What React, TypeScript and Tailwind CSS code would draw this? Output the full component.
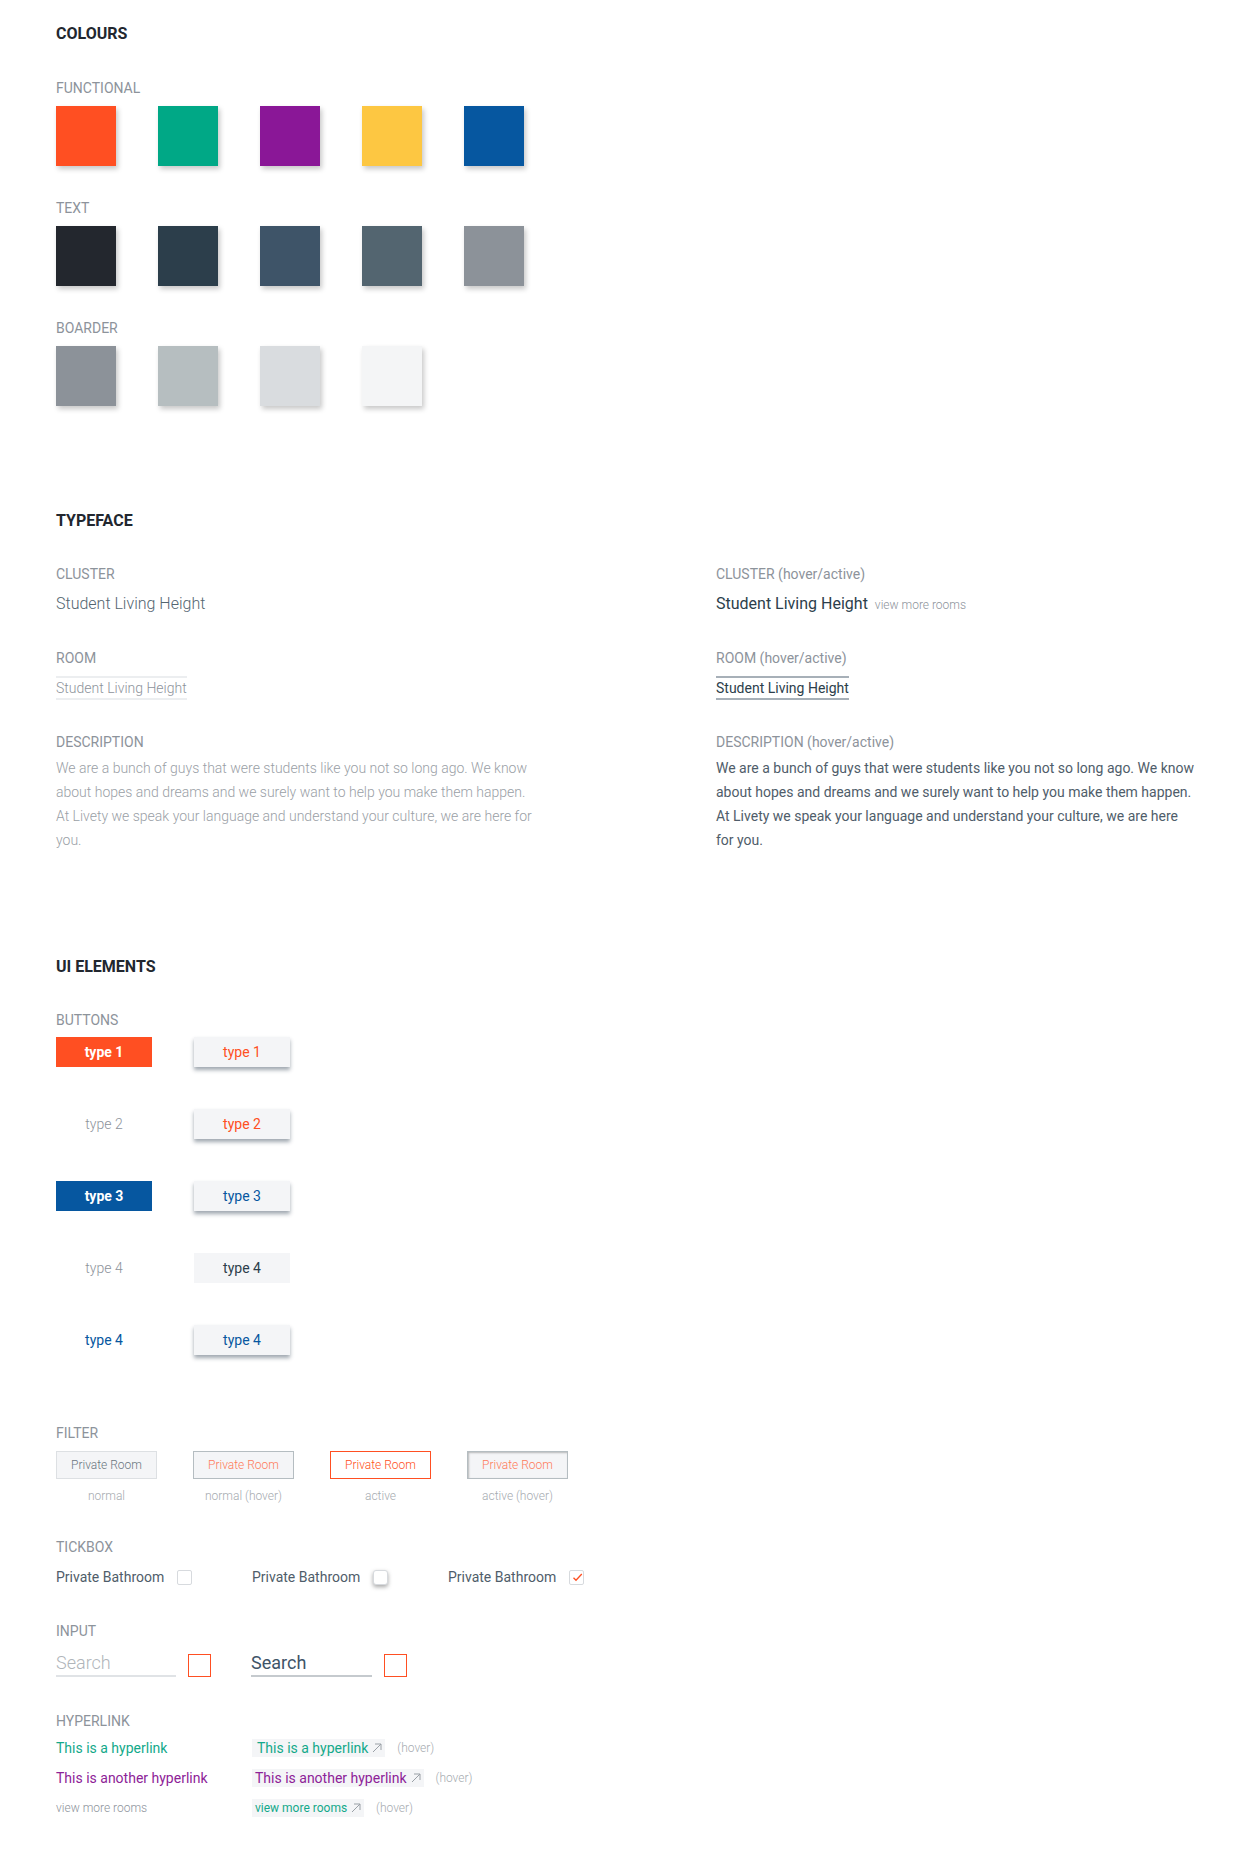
import { ReactNode } from "react";

const Heading = ({ children }: { children: ReactNode }) => (
    <h2 className="text-[16px] leading-5 font-bold text-[#22272f]">{children}</h2>
);

const Label = ({ children, className = "" }: { children: ReactNode; className?: string }) => (
    <div className={"text-[14px] leading-4 text-[#8d939b] " + className}>{children}</div>
);

const palettes = [
    { name: "FUNCTIONAL", colors: ["bg-[#ff4f22]", "bg-[#00a886]", "bg-[#8a1797]", "bg-[#fdc742]", "bg-[#0657a0]"] },
    { name: "TEXT", colors: ["bg-[#23272e]", "bg-[#2c3e4b]", "bg-[#3e5468]", "bg-[#536570]", "bg-[#8c9299]"] },
    { name: "BOARDER", colors: ["bg-[#8c9299]", "bg-[#b6bec0]", "bg-[#d9dcdf]", "bg-[#f4f5f6]"] },
];

const description =
    "We are a bunch of guys that were students like you not so long ago. We know about hopes and dreams and we surely want to help you make them happen. At Livety we speak your language and understand your culture, we are here for you.";

const Arrow = () => (
    <svg width="10" height="10" viewBox="0 0 10 10" fill="none" stroke="#9aa0a6" strokeWidth="1">
        <path d="M1 9L9 1M3 1H9V7" />
    </svg>
);

const btnBase = "h-[30px] w-[96px] flex items-center justify-center text-[14px]";
const raised = "bg-[#f4f5f7] shadow-[0_3px_4px_rgba(44,62,80,0.45)]";

export default function App() {
    return (
        <div className="min-h-[1858px] bg-white px-[56px] pt-[24px] pb-10 font-['Roboto',sans-serif]">
            {/* colours */}
            <Heading>COLOURS</Heading>
            <div className="mt-[36px] flex flex-col gap-[34px]">
                {palettes.map((p) => (
                    <div key={p.name}>
                        <Label>{p.name}</Label>
                        <div className="mt-[10px] flex gap-[42px]">
                            {p.colors.map((c, i) => (
                                <div key={i} className={"h-[60px] w-[60px] shadow-[2px_3px_5px_rgba(0,0,0,0.22)] " + c} />
                            ))}
                        </div>
                    </div>
                ))}
            </div>

            {/* typeface */}
            <div className="mt-[105px]">
                <Heading>TYPEFACE</Heading>
            </div>
            <div className="mt-[35px] grid grid-cols-[660px_1fr]">
                <div>
                    <Label>CLUSTER</Label>
                    <div className="mt-[12px] text-[16px] leading-5 font-light text-[#536570]">Student Living Height</div>
                    <Label className="mt-[36px]">ROOM</Label>
                    <div className="mt-[10px] w-fit border-y-2 border-[#eceef0] text-[14px] leading-5 font-light text-[#8d939b]">
                        Student Living Height
                    </div>
                    <Label className="mt-[34px]">DESCRIPTION</Label>
                    <p className="mt-[6px] w-[481px] text-[14px] leading-6 font-light text-[#9aa0a6]">{description}</p>
                </div>
                <div>
                    <Label>CLUSTER (hover/active)</Label>
                    <div className="mt-[12px] flex items-baseline gap-[7px]">
                        <span className="text-[16px] leading-5 text-[#2c3e4b]">Student Living Height</span>
                        <span className="text-[12px] font-light text-[#8d939b]">view more rooms</span>
                    </div>
                    <Label className="mt-[36px]">ROOM (hover/active)</Label>
                    <div className="mt-[10px] w-fit border-y-2 border-[#a7b0b8] text-[14px] leading-5 text-[#2c3e4b]">
                        Student Living Height
                    </div>
                    <Label className="mt-[34px]">DESCRIPTION (hover/active)</Label>
                    <p className="mt-[6px] w-[481px] text-[14px] leading-6 text-[#4f5d6a]">{description}</p>
                </div>
            </div>

            {/* ui elements */}
            <div className="mt-[105px]">
                <Heading>UI ELEMENTS</Heading>
            </div>
            <Label className="mt-[35px]">BUTTONS</Label>
            <div className="mt-[9px] grid grid-cols-[96px_96px] gap-x-[42px] gap-y-[42px]">
                <button className={btnBase + " bg-[#ff4f22] font-bold text-white"}>type 1</button>
                <button className={btnBase + " " + raised + " text-[#ff4f22]"}>type 1</button>
                <button className={btnBase + " font-light text-[#8d939b]"}>type 2</button>
                <button className={btnBase + " " + raised + " text-[#ff4f22]"}>type 2</button>
                <button className={btnBase + " bg-[#0657a0] font-bold text-white"}>type 3</button>
                <button className={btnBase + " " + raised + " text-[#0657a0]"}>type 3</button>
                <button className={btnBase + " font-light text-[#8d939b]"}>type 4</button>
                <button className={btnBase + " bg-[#f4f5f7] text-[#2c3e4b]"}>type 4</button>
                <button className={btnBase + " text-[#0657a0]"}>type 4</button>
                <button className={btnBase + " " + raised + " text-[#0657a0]"}>type 4</button>
            </div>

            <Label className="mt-[70px]">FILTER</Label>
            <div className="mt-[10px] flex gap-[36px]">
                {[
                    { box: "bg-[#f4f5f7] border border-[#dde0e3] text-[#6b7580]", cap: "normal" },
                    { box: "bg-[#f4f5f7] border border-[#b5bdc1] text-[#ff7a59]", cap: "normal (hover)" },
                    { box: "bg-white border border-[#ff4f22] text-[#ff4f22]", cap: "active" },
                    { box: "bg-[#f4f5f7] border border-[#b5bdc1] shadow-[inset_1px_1px_2px_rgba(0,0,0,0.25)] text-[#ff7a59]", cap: "active (hover)" },
                ].map((f) => (
                    <div key={f.cap} className="flex w-[101px] flex-col items-center">
                        <div className={"flex h-[28px] w-full items-center justify-center text-[12px] font-light " + f.box}>Private Room</div>
                        <div className="mt-[10px] text-[12px] leading-[14px] font-light text-[#a6abb0]">{f.cap}</div>
                    </div>
                ))}
            </div>

            <Label className="mt-[36px]">TICKBOX</Label>
            <div className="mt-[12px] flex">
                <div className="flex w-[196px] items-center gap-[13px] text-[14px] leading-5 text-[#4f5d6a]">
                    Private Bathroom
                    <span className="h-[15px] w-[15px] rounded-[2px] border border-[#d7dade] bg-white" />
                </div>
                <div className="flex w-[196px] items-center gap-[13px] text-[14px] leading-5 text-[#4f5d6a]">
                    Private Bathroom
                    <span className="h-[15px] w-[15px] rounded-[3px] border border-[#d7dade] bg-white shadow-[0_2px_4px_rgba(0,0,0,0.35)]" />
                </div>
                <div className="flex w-[196px] items-center gap-[13px] text-[14px] leading-5 text-[#4f5d6a]">
                    Private Bathroom
                    <span className="relative h-[15px] w-[15px] rounded-[2px] border border-[#d7dade] bg-white">
                        <svg className="absolute -top-[1px] left-0" width="15" height="15" viewBox="0 0 15 15" fill="none">
                            <path d="M3.5 7.8L6 10.3L11.8 4" stroke="#ff4f22" strokeWidth="1.3" />
                        </svg>
                    </span>
                </div>
            </div>

            <Label className="mt-[36px]">INPUT</Label>
            <div className="mt-[15px] flex items-end gap-[40px]">
                <div className="flex items-end gap-[12px]">
                    <div className="h-[23px] w-[120px] border-b-2 border-[#e0e3e6] text-[18px] leading-[18px] font-light text-[#b0b5ba]">Search</div>
                    <div className="h-[23px] w-[23px] border border-[#ff4f22]" />
                </div>
                <div className="flex items-end gap-[12px]">
                    <div className="h-[23px] w-[121px] border-b-2 border-[#c5cace] text-[18px] leading-[18px] text-[#3e5468]">Search</div>
                    <div className="h-[23px] w-[23px] border border-[#ff4f22]" />
                </div>
            </div>

            <Label className="mt-[36px]">HYPERLINK</Label>
            <div className="mt-[10px] flex flex-col gap-[12px]">
                <div className="flex h-[18px] items-center">
                    <span className="w-[196px] text-[14px] text-[#13a98a]">This is a hyperlink</span>
                    <span className="flex h-[18px] items-center gap-[4px] bg-[#f4f5f7] pr-[3px] pl-[5px] text-[14px] text-[#13a98a]">
                        This is a hyperlink <Arrow />
                    </span>
                    <span className="ml-[12px] text-[12px] font-light text-[#a6abb0]">(hover)</span>
                </div>
                <div className="flex h-[18px] items-center">
                    <span className="w-[196px] text-[14px] text-[#8d2297]">This is another hyperlink</span>
                    <span className="flex h-[18px] items-center gap-[4px] bg-[#f4f5f7] pr-[3px] pl-[3px] text-[14px] text-[#8d2297]">
                        This is another hyperlink <Arrow />
                    </span>
                    <span className="ml-[12px] text-[12px] font-light text-[#a6abb0]">(hover)</span>
                </div>
                <div className="flex h-[18px] items-center">
                    <span className="w-[196px] text-[12px] font-light text-[#8d939b]">view more rooms</span>
                    <span className="flex h-[18px] items-center gap-[4px] bg-[#f4f5f7] pr-[3px] pl-[3px] text-[12px] text-[#13a98a]">
                        view more rooms <Arrow />
                    </span>
                    <span className="ml-[12px] text-[12px] font-light text-[#a6abb0]">(hover)</span>
                </div>
            </div>
        </div>
    );
}
